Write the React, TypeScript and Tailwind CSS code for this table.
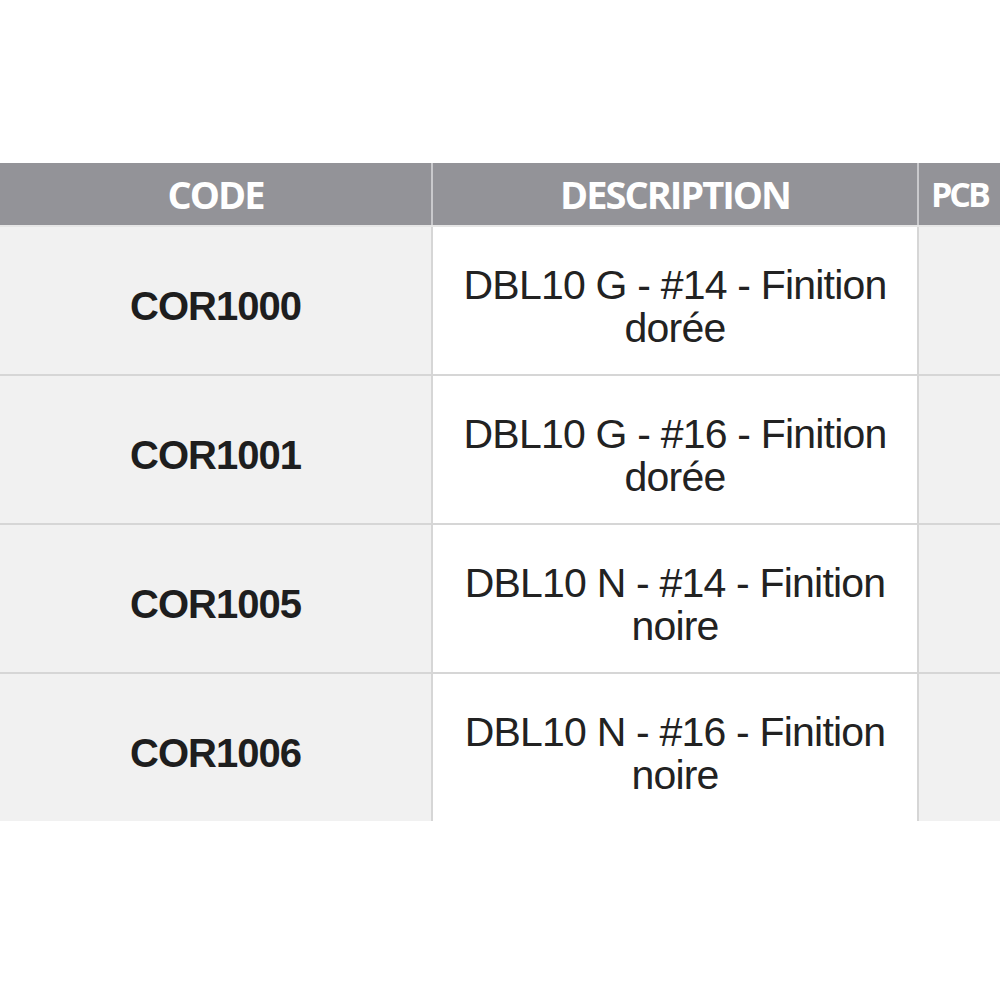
import React from "react";

interface Row {
  code: string;
  line1: string;
  line2: string;
}

const rows: Row[] = [
  { code: "COR1000", line1: "DBL10 G - #14 - Finition", line2: "dorée" },
  { code: "COR1001", line1: "DBL10 G - #16 - Finition", line2: "dorée" },
  { code: "COR1005", line1: "DBL10 N - #14 - Finition", line2: "noire" },
  { code: "COR1006", line1: "DBL10 N - #16 - Finition", line2: "noire" },
];

const head = "font-['Open_Sans',sans-serif] font-bold text-white text-[38px] tracking-[-2px] flex items-center justify-center h-[62px] bg-[#939398]";

const App: React.FC = () => {
  return (
    <div className="w-[1000px] h-[1000px] bg-white overflow-hidden pt-[163px]">
      <div className="grid grid-cols-[431px_2px_484px_2px_1fr]">
        {/* header */}
        <div className={head}>CODE</div>
        <div className="bg-[#c9c9cc]" />
        <div className={head}>DESCRIPTION</div>
        <div className="bg-[#c9c9cc]" />
        <div className="font-['Open_Sans',sans-serif] font-bold text-white text-[34px] tracking-[-3px] flex items-center h-[62px] bg-[#939398] pl-[12px]">
          PCB
        </div>

        {rows.map((r, i) => (
          <React.Fragment key={r.code}>
            <div className="col-span-5 h-[2px] bg-[#d6d6d6]" style={{ opacity: i === 0 ? 0.6 : 1 }} />
            <div className="h-[147px] bg-[#f1f1f1] flex items-center justify-center pt-[10px] font-['Liberation_Sans',Arial,sans-serif] font-bold text-[40px] text-[#1e1e1e] tracking-[-1px]">
              {r.code}
            </div>
            <div className="bg-[#d6d6d6]" />
            <div className="h-[147px] bg-white flex flex-col items-center justify-center pt-[12px] font-['Liberation_Sans',Arial,sans-serif] text-[41px] leading-[43px] text-[#222] tracking-[-0.8px]">
              <span>{r.line1}</span>
              <span>{r.line2}</span>
            </div>
            <div className="bg-[#d6d6d6]" />
            <div className="h-[147px] bg-[#f1f1f1]" />
          </React.Fragment>
        ))}
      </div>
    </div>
  );
};

export default App;
